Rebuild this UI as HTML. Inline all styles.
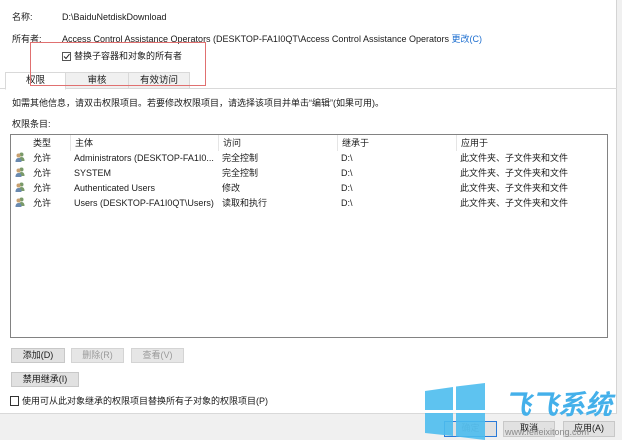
<!DOCTYPE html>
<html><head><meta charset="utf-8"><style>
*{margin:0;padding:0;box-sizing:border-box}
body{width:622px;height:440px;overflow:hidden;background:#f0f0f0;font-family:"Liberation Sans","Noto Sans CJK SC",sans-serif;font-size:9px;color:#1a1a1a;position:relative}
.a{position:absolute;white-space:nowrap;line-height:11px}
.panel{position:absolute;left:0;top:0;width:617px;height:414px;background:#fff;border-right:1px solid #d4d4d4;border-bottom:1px solid #d9d9d9}
.btn{position:absolute;background:#e1e1e1;border:1px solid #c8c8c8;text-align:center;line-height:13px;font-size:9px}
.dis{color:#9a9a9a;background:#e6e6e6;border-color:#d4d4d4}
.tab{position:absolute;top:72px;height:17px;border:1px solid #d9d9d9;background:#f0f0f0;text-align:center;line-height:15px;font-size:9.5px}
.cb{position:absolute;width:9px;height:9px;border:1px solid #333;background:#fff}
.ic{position:absolute;left:4px;top:2px;width:11px;height:10px}
</style></head><body>
<div class="panel"></div>
<div class="a" style="left:12px;top:12px">名称:</div>
<div class="a" style="left:62px;top:12px">D:\BaiduNetdiskDownload</div>
<div class="a" style="left:12px;top:34px">所有者:</div>
<div class="a" style="left:62px;top:34px">Access Control Assistance Operators (DESKTOP-FA1I0QT\Access Control Assistance Operators <span style="color:#1e6fd0">更改(C)</span></div>
<div class="cb" style="left:62px;top:52px;border-color:#555"><svg width="7" height="7" style="position:absolute;left:0;top:0"><path d="M1 3.5 L3 5.5 L6.5 1" stroke="#222" fill="none" stroke-width="1"/></svg></div>
<div class="a" style="left:74px;top:51px">替换子容器和对象的所有者</div>
<div style="position:absolute;left:0;top:88px;width:617px;height:1px;background:#d9d9d9"></div>
<div class="tab" style="left:65px;width:64px">审核</div>
<div class="tab" style="left:128px;width:62px">有效访问</div>
<div class="tab" style="left:5px;width:61px;background:#fff;border-bottom-color:#fff;height:18px">权限</div>
<div style="position:absolute;left:30px;top:42px;width:176px;height:44px;border:1px solid #e07070"></div>
<div class="a" style="left:12px;top:98px">如需其他信息，请双击权限项目。若要修改权限项目，请选择该项目并单击“编辑”(如果可用)。</div>
<div class="a" style="left:12px;top:119px">权限条目:</div>
<div style="position:absolute;left:10px;top:134px;width:598px;height:204px;border:1px solid #828282;background:#fff">
<div style="position:absolute;left:59px;top:0;width:1px;height:16px;background:#e5e5e5"></div>
<div style="position:absolute;left:207px;top:0;width:1px;height:16px;background:#e5e5e5"></div>
<div style="position:absolute;left:326px;top:0;width:1px;height:16px;background:#e5e5e5"></div>
<div style="position:absolute;left:445px;top:0;width:1px;height:16px;background:#e5e5e5"></div>
<div class="a" style="left:22px;top:3px">类型</div><div class="a" style="left:64px;top:3px">主体</div><div class="a" style="left:212px;top:3px">访问</div><div class="a" style="left:331px;top:3px">继承于</div><div class="a" style="left:450px;top:3px">应用于</div>
</div>
<div style="position:absolute;left:11px;top:150px">
<div style="position:absolute;top:0;left:0"><svg class="ic" viewBox="0 0 11 10"><circle cx="6.5" cy="2.5" r="2" fill="#7a9a6a"/><path d="M3.5 9 Q3.5 5 6.5 5 Q9.5 5 9.5 9Z" fill="#7a9a6a"/><circle cx="3.5" cy="3.5" r="2" fill="#c8a070"/><path d="M0.5 10 Q0.5 6 3.5 6 Q6.5 6 6.5 10Z" fill="#6a8ab0"/></svg><span class="a" style="left:22px;top:3px">允许</span><span class="a" style="left:63px;top:3px">Administrators (DESKTOP-FA1I0...</span><span class="a" style="left:211px;top:3px">完全控制</span><span class="a" style="left:330px;top:3px">D:\</span><span class="a" style="left:449px;top:3px">此文件夹、子文件夹和文件</span></div>
<div style="position:absolute;top:15px;left:0"><svg class="ic" viewBox="0 0 11 10"><circle cx="6.5" cy="2.5" r="2" fill="#7a9a6a"/><path d="M3.5 9 Q3.5 5 6.5 5 Q9.5 5 9.5 9Z" fill="#7a9a6a"/><circle cx="3.5" cy="3.5" r="2" fill="#c8a070"/><path d="M0.5 10 Q0.5 6 3.5 6 Q6.5 6 6.5 10Z" fill="#6a8ab0"/></svg><span class="a" style="left:22px;top:3px">允许</span><span class="a" style="left:63px;top:3px">SYSTEM</span><span class="a" style="left:211px;top:3px">完全控制</span><span class="a" style="left:330px;top:3px">D:\</span><span class="a" style="left:449px;top:3px">此文件夹、子文件夹和文件</span></div>
<div style="position:absolute;top:30px;left:0"><svg class="ic" viewBox="0 0 11 10"><circle cx="6.5" cy="2.5" r="2" fill="#7a9a6a"/><path d="M3.5 9 Q3.5 5 6.5 5 Q9.5 5 9.5 9Z" fill="#7a9a6a"/><circle cx="3.5" cy="3.5" r="2" fill="#c8a070"/><path d="M0.5 10 Q0.5 6 3.5 6 Q6.5 6 6.5 10Z" fill="#6a8ab0"/></svg><span class="a" style="left:22px;top:3px">允许</span><span class="a" style="left:63px;top:3px">Authenticated Users</span><span class="a" style="left:211px;top:3px">修改</span><span class="a" style="left:330px;top:3px">D:\</span><span class="a" style="left:449px;top:3px">此文件夹、子文件夹和文件</span></div>
<div style="position:absolute;top:45px;left:0"><svg class="ic" viewBox="0 0 11 10"><circle cx="6.5" cy="2.5" r="2" fill="#7a9a6a"/><path d="M3.5 9 Q3.5 5 6.5 5 Q9.5 5 9.5 9Z" fill="#7a9a6a"/><circle cx="3.5" cy="3.5" r="2" fill="#c8a070"/><path d="M0.5 10 Q0.5 6 3.5 6 Q6.5 6 6.5 10Z" fill="#6a8ab0"/></svg><span class="a" style="left:22px;top:3px">允许</span><span class="a" style="left:63px;top:3px">Users (DESKTOP-FA1I0QT\Users)</span><span class="a" style="left:211px;top:3px">读取和执行</span><span class="a" style="left:330px;top:3px">D:\</span><span class="a" style="left:449px;top:3px">此文件夹、子文件夹和文件</span></div>
</div>
<div class="btn" style="left:11px;top:348px;width:54px;height:15px">添加(D)</div>
<div class="btn dis" style="left:71px;top:348px;width:53px;height:15px">删除(R)</div>
<div class="btn dis" style="left:131px;top:348px;width:53px;height:15px">查看(V)</div>
<div class="btn" style="left:11px;top:372px;width:68px;height:15px">禁用继承(I)</div>
<div class="cb" style="left:10px;top:396px;width:9px;height:10px"></div>
<div class="a" style="left:22px;top:396px">使用可从此对象继承的权限项目替换所有子对象的权限项目(P)</div>
<div class="btn" style="left:444px;top:421px;width:53px;height:16px;border:1px solid #2a7ad8;color:#888">确定</div>
<div class="btn" style="left:503px;top:421px;width:52px;height:16px">取消</div>
<div class="btn" style="left:563px;top:421px;width:52px;height:16px">应用(A)</div>
<svg style="position:absolute;left:425px;top:383px" width="62" height="57" viewBox="0 0 62 57"><path d="M0 8 L28 4 L28 27 L0 27Z M31 3.5 L60 0 L60 27 L31 27Z M0 30 L28 30 L28 53 L0 50Z M31 30 L60 30 L60 57 L31 53.5Z" fill="#4cbcee" opacity="0.9"/></svg>
<div class="a" style="left:504px;top:386px;font-size:27px;font-weight:bold;font-style:italic;color:#44b0ea;letter-spacing:0px;font-family:'Noto Sans CJK SC',sans-serif;line-height:34px">飞飞系统</div>
<div class="a" style="left:505px;top:427px;font-size:9px;color:#8a8a8a">www.feifeixitong.com</div>
</body></html>
